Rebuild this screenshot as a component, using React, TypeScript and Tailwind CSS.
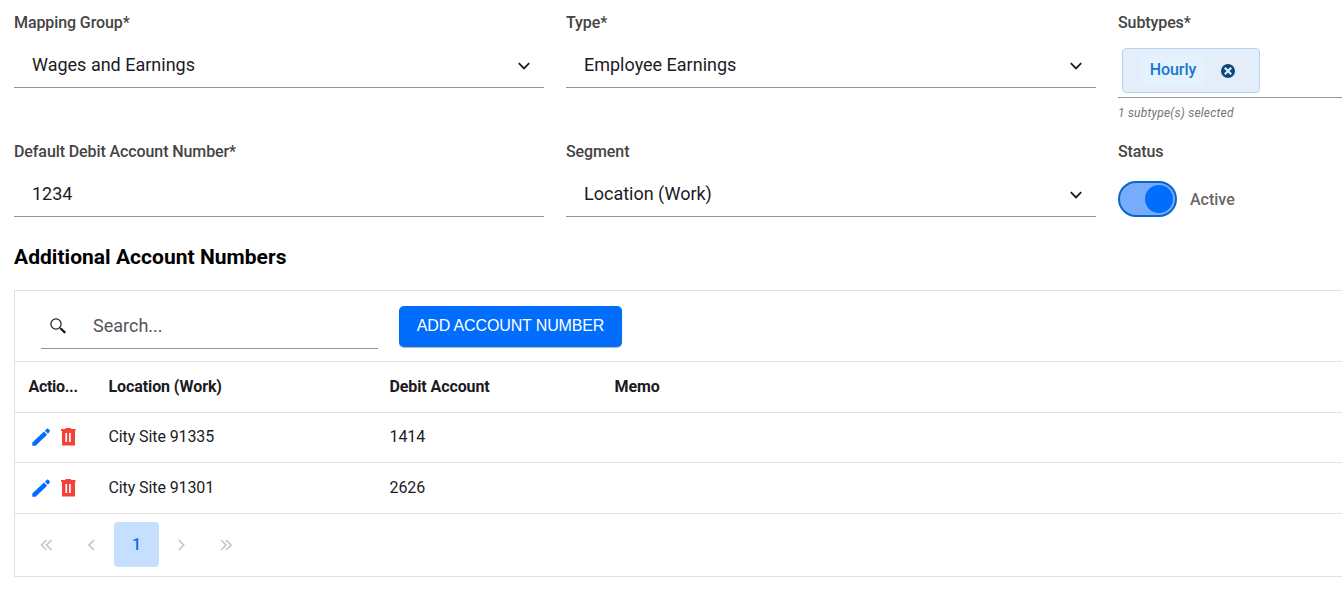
import type { ReactNode } from "react";

const rows = [
    { location: "City Site 91335", debit: "1414", size: "h-[50px] pb-0.5" },
    { location: "City Site 91301", debit: "2626", size: "h-[51px]" },
];

const ChevronDown = () => (
    <svg className="w-3 h-3" viewBox="0 0 12 12" fill="none">
        <path d="M0.8 3.2L6 8.4L11.2 3.2" stroke="#1c1b1f" strokeWidth="1.8" />
    </svg>
);

const SearchIcon = () => (
    <svg className="w-4 h-4" viewBox="0 0 16 16" fill="none" stroke="#1c1b1f">
        <circle cx="6" cy="6" r="5.1" strokeWidth="1.2" />
        <path d="M9.8 9.6L11.4 11.1" strokeWidth="1.2" />
        <path d="M10.7 10.5L15.2 14.9" strokeWidth="2.3" />
    </svg>
);

const PencilIcon = () => (
    <svg className="w-[18px] h-[18px]" viewBox="0 0 18 18" fill="#006dfd">
        <path d="M0.3 14.6V17.8H3.6L15.1 6.7L12 3.5L0.3 14.6Z" />
        <path d="M17.7 3.4C18 3.1 18 2.5 17.7 2.2L16.2 0.7C15.9 0.4 15.3 0.4 15 0.7L12.9 2.7L16 5.8L17.7 3.4Z" />
    </svg>
);

const TrashIcon = () => (
    <svg className="w-[15px] h-[18px]" viewBox="0 0 15 18" fill="#f44336">
        <path
            fillRule="evenodd"
            d="M0 1H4L5 0H9.5L10.5 1H14.5V3H14V17.6H1V3H0V1ZM4.4 5V14H6.1V5H4.4ZM8.1 5V14H9.8V5H8.1Z"
        />
    </svg>
);

const ClearIcon = () => (
    <svg className="w-[14px] h-[14px]" viewBox="0 0 14 14">
        <circle cx="7" cy="7" r="7" fill="#0b477f" />
        <path d="M3.8 3.8L10.2 10.2M10.2 3.8L3.8 10.2" stroke="#e3edfa" strokeWidth="2.2" />
    </svg>
);

const PageArrow = ({ d }: { d: string }) => (
    <span className="w-[45px] h-[45px] flex items-center justify-center">
        <svg className="w-3 h-3" viewBox="0 0 12 12" fill="none" stroke="#c6c6c6" strokeWidth="1.7">
            <path d={d} />
        </svg>
    </span>
);

const Field = ({ label, children }: { label: string; children: ReactNode }) => (
    <div>
        <div className="h-6 leading-[26px] text-base font-medium tracking-[-0.1px] text-[#444444]">{label}</div>
        {children}
    </div>
);

const FieldBox = ({ value, select }: { value: string; select?: boolean }) => (
    <div className="mt-2 h-[46px] flex items-center justify-between pl-[18px] pr-3.5 border-b border-[#949494]">
        <span className="text-lg leading-6 text-[#1c1b1f]">{value}</span>
        {select && (
            <span className="mt-[3px]">
                <ChevronDown />
            </span>
        )}
    </div>
);

const App = () => {
    return (
        <main className="w-full h-[591px] overflow-hidden bg-white pl-3.5 pt-2.5 font-[Roboto,sans-serif]">
            <section className="grid grid-cols-[530px_530px_530px] grid-rows-[129px_auto] gap-x-[22px]">
                <Field label="Mapping Group*">
                    <FieldBox value="Wages and Earnings" select />
                </Field>
                <Field label="Type*">
                    <FieldBox value="Employee Earnings" select />
                </Field>
                <Field label="Subtypes*">
                    <div className="mt-3.5 h-[50px] pl-1 border-b border-[#949494]">
                        <div className="w-[138px] h-[45px] flex items-start pl-[18px] pt-1.5 rounded bg-[#e4eefb] border border-[#b3d3f5]">
                            <span className="w-16 h-[31px] text-center leading-[30px] rounded-lg bg-[#e3f2fd] text-base font-medium tracking-[-0.1px] text-[#1976d2]">
                                Hourly
                            </span>
                            <span className="ml-4 mt-[9px]">
                                <ClearIcon />
                            </span>
                        </div>
                    </div>
                    <div className="mt-1.5 text-xs leading-[18px] italic tracking-[0.21px] text-[#757575]">1 subtype(s) selected</div>
                </Field>
                <Field label="Default Debit Account Number*">
                    <FieldBox value="1234" />
                </Field>
                <Field label="Segment">
                    <FieldBox value="Location (Work)" select />
                </Field>
                <Field label="Status">
                    <div className="mt-[18px] flex items-center gap-[13px]">
                        <div className="w-[59px] h-9 flex items-center justify-end pr-0.5 rounded-full border-2 border-[#0b66c9] bg-[#76acfb]">
                            <div className="w-7 h-7 rounded-full bg-[#006dfd]" />
                        </div>
                        <span className="pt-0.5 text-base font-medium text-[#666666]">Active</span>
                    </div>
                </Field>
            </section>

            <h2 className="mt-[26px] text-[21px] leading-7 font-bold tracking-[0.03px] text-black">Additional Account Numbers</h2>

            <section className="mt-[19px] w-[1640px] h-[287px] border border-[#e0e0e0] text-base tracking-[-0.1px] text-[#1c1b1f]">
                <div className="h-[71px] flex items-start pl-[26px] border-b border-[#e0e0e0]">
                    <div className="mt-3 w-[337px] h-[46px] flex items-center pl-[9px] border-b border-[#949494]">
                        <SearchIcon />
                        <span className="ml-[27px] text-lg tracking-normal text-[#555558]">Search...</span>
                    </div>
                    <button className="ml-[21px] mt-[15px] w-[223px] h-[41px] pb-[2px] rounded-[5px] bg-[#006dfd] text-white text-base tracking-[-0.13px] font-['Liberation_Sans',sans-serif] shadow-[0_1px_1px_rgba(0,0,0,0.3)]">
                        ADD ACCOUNT NUMBER
                    </button>
                </div>
                <div className="h-[51px] grid grid-cols-[80px_281px_225px_1fr] items-center pl-[13.5px] border-b border-[#e0e0e0] font-bold">
                    <span className="tracking-[-0.3px]">Actio...</span>
                    <span>Location (Work)</span>
                    <span>Debit Account</span>
                    <span>Memo</span>
                </div>
                {rows.map((row) => (
                    <div
                        key={row.location}
                        className={`${row.size} grid grid-cols-[80px_281px_225px_1fr] items-center pl-[13.5px] border-b border-[#e0e0e0]`}
                    >
                        <span className="flex items-center gap-[11px] pl-[3.5px]">
                            <PencilIcon />
                            <TrashIcon />
                        </span>
                        <span>{row.location}</span>
                        <span>{row.debit}</span>
                        <span />
                    </div>
                ))}
                <div className="h-[62px] flex items-center pl-[9px]">
                    <div className="flex -ml-px mr-px">
                        <PageArrow d="M6.5 1L1.5 6L6.5 11M11.5 1L6.5 6L11.5 11" />
                        <PageArrow d="M9 1L4 6L9 11" />
                    </div>
                    <span className="w-[45px] h-[45px] mb-0.5 pt-px flex items-center justify-center rounded bg-[#c7dffe] font-medium text-[#006dfd]">
                        1
                    </span>
                    <div className="flex -ml-px">
                        <PageArrow d="M3.7 1L8.7 6L3.7 11" />
                        <PageArrow d="M1 1L6 6L1 11M6 1L11 6L6 11" />
                    </div>
                </div>
            </section>
        </main>
    );
};

export default App;
